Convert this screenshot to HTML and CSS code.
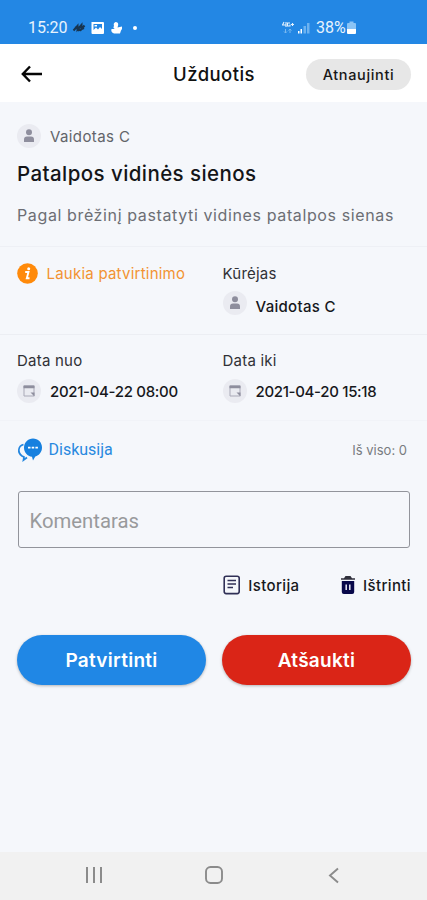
FILE: index.html
```html
<!DOCTYPE html>
<html lang="lt">
<head>
<meta charset="utf-8">
<meta name="viewport" content="width=device-width, initial-scale=1">
<title>Užduotis</title>
<link rel="stylesheet" href="styles.css">
</head>
<body>
<svg class="defs" width="0" height="0" aria-hidden="true">
  <symbol id="person" viewBox="0 0 12 14"><circle cx="6" cy="3.2" r="3"/><path d="M1 13V10.500Q1 7.500 4 7.500H8Q11 7.500 11 10.500V13Z"/></symbol>
  <symbol id="calendar" viewBox="0 0 12 12"><path d="M1 1H11V11H1Z" fill="none" stroke="currentColor"/><path d="M.5 .5H11.500V3.200H.5ZM7.500 7.500H11.500V11.500Z"/></symbol>
</svg>
<div class="phone">
  <div class="status">
    <span class="clock">15:20</span>
    <svg class="status-left" width="70" height="16" viewBox="0 0 70 16">
      <path d="M1.500 10.500L5.500 6L5.500 9.500L9.500 5L9.500 9L12.500 5.500M3 8L5 6.500M6 10.500L12 8" fill="none" stroke="#17344f" stroke-width="2"/>
      <path fill="#fff" fill-rule="evenodd" d="M19.500 2H31Q32 2 32 3V13Q32 14 31 14H20.500Q19.500 14 19.500 13ZM21.500 4V10L24 7.500L26 9.500L28 7L30 9V4Z"/>
      <path fill="#fff" d="M22.500 5H25V6.500H22.500Z"/>
      <path fill="#fff" d="M43.500 2Q46.500 2 46.200 5L45.500 7.500L50 6.500Q50.500 9 49 10.500L48 13.500H42Q38.500 12 39.500 9L43 9Q40.500 8 42 6Q41 3 43.500 2Z"/>
      <circle cx="63" cy="8" r="2" fill="#fff"/>
    </svg>
    <svg class="status-right" width="32" height="16" viewBox="0 0 32 16">
      <path d="M1 5H5M3 2L1.500 5M5 2V7M9 3H6.500V6H9V4.500M10 4.500H13M11.500 3V6" fill="none" stroke="#e6f2fd" stroke-width="1.100"/>
      <path d="M4.500 9V13M3 11.500L4.500 13L6 11.500M9 13V9M7.500 10.500L9 9L10.500 10.500" fill="none" stroke="#79b8f0"/>
      <path fill="#fff" d="M17 11H18.500V13.500H17ZM19.500 9H21V13.500H19.500Z"/><path fill="#6db2f0" d="M22.500 6H25V13.500H22.500ZM26 3H28.500V13.500H26Z"/>
    </svg>
    <span class="percent">38%</span>
    <svg width="9" height="14" viewBox="0 0 9 14"><path fill="#8bc4f5" d="M0 3Q0 2 1 2H2.500V.5H6.500V2H8Q9 2 9 3V8H0Z"/><path fill="#fff" d="M0 8H9V12Q9 13 8 13H1Q0 13 0 12Z"/></svg>
  </div>
  <header class="header">
    <svg class="back" width="22" height="18" viewBox="0 0 22 18"><path d="M21 9H2M9 1.500L1.800 9L9 16.500" fill="none" stroke="#060606" stroke-width="2.400"/></svg>
    <h1>Užduotis</h1>
    <button class="update">Atnaujinti</button>
  </header>
  <main>
    <section class="intro">
      <div class="person"><i class="badge"><svg width="12" height="14"><use href="#person"/></svg></i><span class="t-author">Vaidotas C</span></div>
      <h2>Patalpos vidinės sienos</h2>
      <p>Pagal brėžinį pastatyti vidines patalpos sienas</p>
    </section>
    <section class="pair state">
      <div class="waiting">
        <svg width="21" height="21" viewBox="0 0 21 21"><circle cx="10.500" cy="10.500" r="10.300" fill="#ff8a0a"/><circle cx="11.700" cy="5.800" r="1.500" fill="#fff"/><path d="M8.200 9H11.500L9.800 15.300H12.500" fill="none" stroke="#fff" stroke-width="1.900"/></svg>
        <span>Laukia patvirtinimo</span>
      </div>
      <div>
        <div class="label">Kūrėjas</div>
        <div class="person"><i class="badge raised"><svg width="12" height="14"><use href="#person"/></svg></i><span>Vaidotas C</span></div>
      </div>
    </section>
    <section class="pair dates">
      <div>
        <div class="label">Data nuo</div>
        <div class="person"><i class="badge"><svg width="12" height="12"><use href="#calendar"/></svg></i><span>2021-04-22 08:00</span></div>
      </div>
      <div>
        <div class="label">Data iki</div>
        <div class="person"><i class="badge"><svg width="12" height="12"><use href="#calendar"/></svg></i><span>2021-04-20 15:18</span></div>
      </div>
    </section>
    <section class="discussion">
      <svg width="26" height="24" viewBox="0 0 26 24"><path d="M6.500 6.500C1 8 .2 14.500 5 18L7 19L6.500 22L10 19.500" fill="none" stroke="#2386df" stroke-width="1.700"/><path fill="#1680df" d="M16 .5C21 .5 25 4.300 25 9.500C25 14 22 17.500 18.300 18.500L16 22.500L15 18.800C10.500 18.300 7 14.500 7 9.800C7 4.500 11 .5 16 .5Z"/><path d="M11 9.700H21" stroke="#fff" stroke-width="1.800" stroke-dasharray="2.500 1.200"/></svg>
      <span class="talk">Diskusija</span><span class="total">Iš viso: 0</span>
    </section>
    <input class="comment" type="text" placeholder="Komentaras">
    <div class="tools">
      <div class="tool"><svg width="18" height="20" viewBox="0 0 18 20"><rect x="1.200" y="1.200" width="15" height="17.400" rx="2" fill="none" stroke="#303056" stroke-width="1.600"/><path d="M4.500 5.500H13M4.500 9H13M4.500 12.500H10" stroke="#303056" stroke-width="1.500"/></svg><span>Istorija</span></div>
      <div class="tool"><svg width="16" height="20" viewBox="0 0 16 20"><path fill="#30303c" d="M1 3.200H4L5.500 1H10.500L12 3.200H15V4.800H1Z"/><path fill="#08084a" d="M1.800 6H14.200V17Q14.200 19 12.200 19H3.800Q1.800 19 1.800 17Z"/><path d="M6.200 9.500V15M9.800 9.500V15" stroke="#e9e9f5" stroke-width="1.500"/></svg><span>Ištrinti</span></div>
    </div>
    <div class="actions"><button class="approve">Patvirtinti</button><button class="cancel">Atšaukti</button></div>
  </main>
  <nav class="nav">
    <svg width="18" height="18" viewBox="0 0 18 18"><path d="M2 1V17M9 1V17M16 1V17" stroke="#8b8b8b" stroke-width="2"/></svg>
    <svg width="18" height="18" viewBox="0 0 18 18"><rect x="1" y="1" width="16" height="16" rx="4.500" fill="none" stroke="#8b8b8b" stroke-width="1.900"/></svg>
    <svg width="18" height="18" viewBox="0 0 18 18"><path d="M13 2.500L5 9.500L13 16.500" fill="none" stroke="#8b8b8b" stroke-width="1.900"/></svg>
  </nav>
</div>
</body>
</html>
```
FILE: styles.css
```css
* { box-sizing: border-box; }
body { margin: 0; font-family: Inter, "Liberation Sans", sans-serif; color: #17181c; background: #f5f7fb; }
svg { display: block; flex: none; }
.defs { position: absolute; }
button { border: 0; font-family: inherit; padding: 0; }
h1, h2, p { margin: 0; }
span, .label, h1, h2, p { white-space: nowrap; }
.phone { height: 900px; display: flex; flex-direction: column; }
.status { height: 44px; flex: none; background: #2387e4; color: #e8f3fd; display: flex; align-items: center; padding: 12px 71px 0 28px; font: 16px/20px Roboto, sans-serif; }
.clock { width: 44px; letter-spacing: -.1px; }
.status-right { margin-left: auto; margin-right: 3px; }
.percent { width: 31px; }
.header { height: 58px; flex: none; background: #fff; display: grid; grid-template-columns: 1fr auto 1fr; align-items: center; padding: 2px 16px 0 17px; }
.back { margin-left: 4px; }
.header h1 { font-size: 18.5px; font-weight: 500; line-height: 24px; color: #111; letter-spacing: .45px; }
.update { justify-self: end; width: 105px; height: 31px; border-radius: 16px; background: #e7e7e7; color: #171717; font-size: 14.5px; font-weight: 500; letter-spacing: .65px; }
main { flex: 1; }
.intro { height: 145px; padding: 21px 17px 0; border-bottom: 1px solid #eef0f5; }
.person { display: flex; align-items: center; gap: 9px; height: 26px; font-size: 15px; font-weight: 500; letter-spacing: .3px; }
.badge { width: 24px; height: 24px; flex: none; border-radius: 50%; background: #eaebf1; color: #a9a9b7; display: grid; place-items: center; fill: #8e8e9d; }
.raised { margin-top: -6px; }
.t-author { font-weight: 400; color: #626469; letter-spacing: .4px; }
.intro h2 { margin-top: 11px; font-size: 20.5px; line-height: 28px; font-weight: 500; color: #141518; letter-spacing: .42px; }
.intro p { margin-top: 16px; font-size: 16px; line-height: 22px; color: #6c6e74; letter-spacing: .62px; }
.pair { display: grid; grid-template-columns: 205.5px 1fr; padding: 0 17px; border-bottom: 1px solid #eceef3; }
.state { height: 88px; padding-top: 16px; }
.waiting { display: flex; align-items: center; gap: 8.5px; height: 21px; color: #f29332; font-size: 15px; letter-spacing: .23px; }
.label { font-size: 15px; line-height: 22px; color: #303136; letter-spacing: .22px; }
.state .person { margin-top: 8px; }
.dates { height: 86px; padding-top: 15px; border-color: #f1f3f8; }
.dates .person { margin-top: 6px; letter-spacing: -.32px; }
.discussion { display: flex; align-items: center; height: 57px; padding: 1px 20px 0 16.5px; gap: 6px; }
.talk { color: #2889df; font: 16px/20px Roboto, sans-serif; }
.total { margin-left: auto; color: #787b80; font-size: 13px; }
.comment { display: block; width: 392px; height: 57px; margin: 13px 0 0 18px; padding: 2px 11px 0 10.5px; border: 1px solid #92949b; border-radius: 3px; background: transparent; font: 20.3px Roboto, sans-serif; outline: 0; }
.comment::placeholder { color: #999a9c; opacity: 1; }
.tools { display: flex; justify-content: flex-end; gap: 40px; padding: 26px 16px 0; }
.tool { display: flex; align-items: center; gap: 7.5px; height: 22px; font-size: 15px; font-weight: 500; letter-spacing: .38px; }
.actions { display: grid; grid-template-columns: 189px 189px; gap: 16px; padding: 39px 17px 0; }
.actions button { height: 50px; border-radius: 25px; color: #fff; font-size: 19px; font-weight: 600; letter-spacing: .28px; box-shadow: 0 1px 3px #0004; }
.approve { background: #2087e5; }
.actions .cancel { background: #da2517; }
.nav { height: 48px; flex: none; background: #f1f1f1; display: flex; align-items: center; justify-content: space-between; padding: 0 84px 2px 85px; }
```
